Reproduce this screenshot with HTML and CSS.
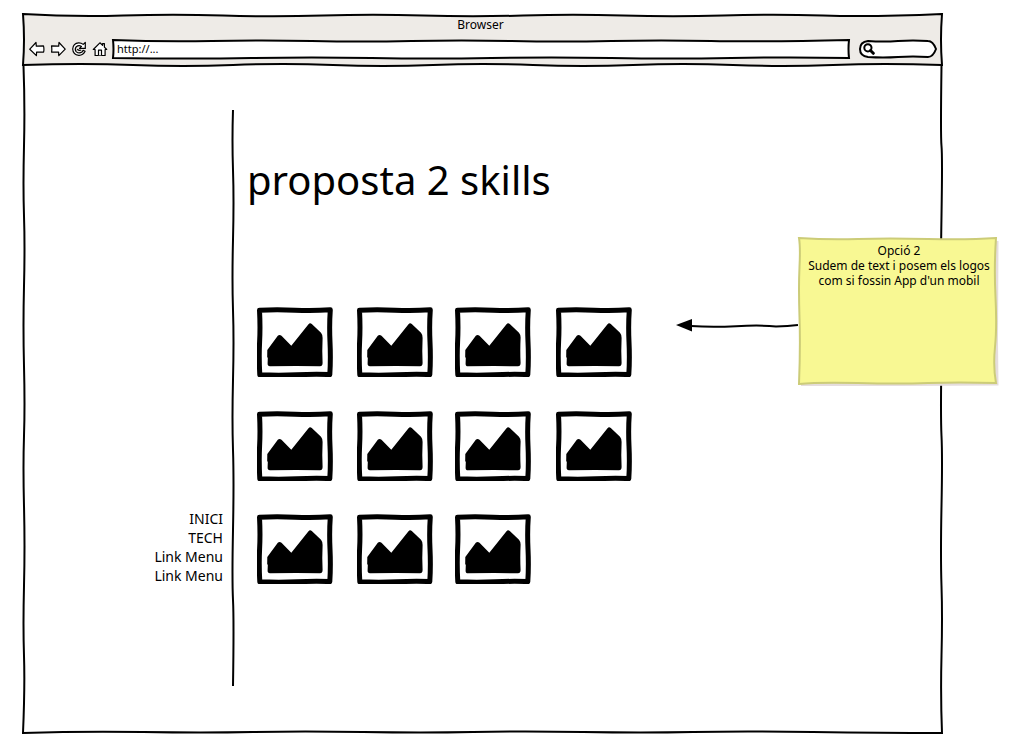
FILE: index.html
```html
<!DOCTYPE html>
<html lang="ca">
<head>
<meta charset="utf-8">
<meta name="viewport" content="width=device-width, initial-scale=1">
<title>proposta 2 skills</title>
<link rel="stylesheet" href="styles.css">
</head>
<body>
<svg class="defs" aria-hidden="true">
  <symbol id="picture" viewBox="0 0 76 70">
    <path d="M2.5 3.2 Q20 2.4 38 3.2 T73.3 2.8 Q72.2 18 73 35 T72.8 67.600 Q58 67 40 67.800 T2.8 67.800 Q1.8 50 2.6 35 T2.5 3.2Z" fill="#fff" stroke="#000" stroke-width="5" stroke-linejoin="round"/>
    <path d="M10.300 43 L20.800 28.800 Q22.500 27 24.500 28.800 L34.3 38.800 L51.500 17.2 Q53 15.6 54.8 17 L64 25.8 Q65.800 28 65.600 31 Q65 44 65.600 56 Q65.5 59.300 63 59.300 Q40 58.800 13 59.300 Q10.5 59.300 10.6 56.5 L10.8 51 L10.2 50Z"/>
  </symbol>
</svg>
<div class="browser">
  <header class="chrome">
    <svg class="sketch" viewBox="0 0 919 52" preserveAspectRatio="none" aria-hidden="true">
      <path class="chrome-fill" d="M0 0 Q50 3 100 1.500 T200 1.500 T300 1.500 T400 1.500 T500 1.500 T600 1.500 T700 1.500 T800 1.500 T919 0 Q917 26 919 51 Q860 49 810 51 T710 51 T610 51 T510 51 T410 51 T310 51 T210 51 T110 51 T0 51 Q2 26 0 0Z"/>
    </svg>
    <div class="title">Browser</div>
    <div class="toolbar">
      <button class="tool" type="button" aria-label="Enrere"><svg viewBox="0 0 16 16"><path d="M.8 8.2 7 1.500l.3 3.6 7.2-.2q.8 3 .1 6.200l-7-.1-.2 3.600Z"/></svg></button>
      <button class="tool" type="button" aria-label="Endavant"><svg viewBox="0 0 16 16"><path d="M15.2 8.2 9 1.500l-.3 3.6-7.2-.2q.6 3 .1 6.200l7-.1.2 3.600Z"/></svg></button>
      <button class="tool" type="button" aria-label="Recarrega"><svg viewBox="0 0 16 16"><path d="M14.3 1.5v5.9H8.5l2-2Q7.7 3.6 5.3 5.7 3.3 8.2 5.1 10.6q2.800 2.500 5.900.5l1.100-1.700 2 .9Q12 14.500 7.800 14.300 2 13.700 1.700 8 2.200 2.300 7.600 1.900q2.700-.1 4.600 1.500Z"/><path d="M6.200 8.200q2 1.800 4 .8"/></svg></button>
      <button class="tool" type="button" aria-label="Inici"><svg viewBox="0 0 16 16"><path d="M1.300 8.500 7.900 1.800l2.700 2.500V2.600h1.800v3.600l2.300 2.300h-1.600v6H3.100v-6Z"/><path d="M6.500 14.300V9.200h3v5.100"/></svg></button>
      <div class="address">
        <svg class="sketch" viewBox="0 0 739 20" preserveAspectRatio="none" aria-hidden="true">
          <path class="box" d="M1 1 Q50 3 100 2 T200 2 T300 2 T400 2 T500 2 T600 2 T738 1 Q737 10 738 19 Q680 18 620 19 T500 19 T380 19 T260 19 T140 19 T1 19 Q2 10 1 1Z"/>
        </svg>
        <input type="text" value="http://..." aria-label="Adreça">
      </div>
      <div class="search">
        <svg class="sketch" viewBox="0 0 78 18" preserveAspectRatio="none" aria-hidden="true">
          <path class="box" d="M9 1 Q24 2 39 1 T69 1 Q74 1 77 9 Q74 17 69 17 Q54 16 39 17 T9 17 Q1 16 1 9 Q1 2 9 1Z"/>
        </svg>
        <svg class="lens" viewBox="0 0 12 12" aria-hidden="true"><circle cx="4.900" cy="4.800" r="3.600"/><path d="M7.500 7.500 10.300 10.300"/></svg>
        <input type="text" aria-label="Cerca">
      </div>
    </div>
  </header>
  <div class="page">
    <svg class="sketch" viewBox="0 0 919 668" preserveAspectRatio="none" aria-hidden="true">
      <path class="line" d="M.5 0 Q2 40 1 80 T1 150 T1 220 T1 300 T1 370 T1 440 T1 520 T1 590 T0 667 Q60 665 120 666 T230 666 T340 666 T450 666 T560 666 T670 666 T790 666 T919 667 Q917.500 630 918.500 590 T918.500 520 T918.500 440 T918.500 370 T918.500 290 T918.500 220 T918.500 150 T918.500 80 T918.500 0"/>
    </svg>
    <nav class="menu">
      <svg class="divider" viewBox="0 0 4 576" preserveAspectRatio="none" aria-hidden="true">
        <path class="line" d="M2 0 Q1 30 2 60 T2 130 T2 200 T2 270 T2 340 T2 420 T2 490 T2 576"/>
      </svg>
      <a href="#inici">INICI</a>
      <a href="#tech">TECH</a>
      <a href="#menu3">Link Menu</a>
      <a href="#menu4">Link Menu</a>
    </nav>
    <main class="content">
      <h1>proposta 2 skills</h1>
      <div class="gallery">
        <svg><use href="#picture"/></svg>
        <svg><use href="#picture"/></svg>
        <svg><use href="#picture"/></svg>
        <svg><use href="#picture"/></svg>
        <svg><use href="#picture"/></svg>
        <svg><use href="#picture"/></svg>
        <svg><use href="#picture"/></svg>
        <svg><use href="#picture"/></svg>
        <svg><use href="#picture"/></svg>
        <svg><use href="#picture"/></svg>
        <svg><use href="#picture"/></svg>
      </div>
    </main>
  </div>
  <aside class="annotation">
    <svg class="arrow" viewBox="0 0 122 14" aria-hidden="true">
      <path d="M0 7 16 1V13.500Z"/>
      <path class="line" d="M15 8 Q35 9.500 60 8.200 T100 8.500 Q112 8.500 122 7"/>
    </svg>
    <div class="note">
      <svg class="sketch" viewBox="0 0 200 149" preserveAspectRatio="none" aria-hidden="true">
        <path class="shadow" d="M3 4 L200.500 4 200 104 200.500 148.500 100 149 3 149Z"/>
        <path class="paper" d="M1 1 Q30 3 60 2 T130 2 T198 1 Q196 30 197.500 60 T197 110 T198 146 Q160 145 130 146 T60 146 T1 147 Q2.500 110 1.500 80 T1.500 30 T1 1Z"/>
      </svg>
      <p>Opció 2<br>Sudem de text i posem els logos<br>com si fossin App d'un mobil</p>
    </div>
  </aside>
</div>
</body>
</html>
```
FILE: styles.css
```css
* { box-sizing: border-box; }

body {
  margin: 0;
  padding: 14px 74px 7px 23px;
  background: #fff;
  color: #000;
  font-family: "Noto Sans", sans-serif;
  font-size: 12px;
}

.defs { position: absolute; width: 0; height: 0; }

.browser {
  position: relative;
  display: flex;
  flex-direction: column;
  min-height: calc(100vh - 21px);
}

/* Hand-drawn outlines stretch with the box they surround */
.sketch {
  position: absolute;
  inset: 0;
  width: 100%;
  height: 100%;
  overflow: visible;
  pointer-events: none;
}

.sketch path, .line { vector-effect: non-scaling-stroke; }
.line { fill: none; stroke: #000; stroke-width: 2; }
.box { fill: #fff; stroke: #000; stroke-width: 2; }
.chrome-fill { fill: #eeebe7; stroke: #000; stroke-width: 2; }

.chrome { position: relative; height: 52px; }

.title {
  position: relative;
  padding: 2px 4px 0 0;
  line-height: 18px;
  text-align: center;
}

.toolbar {
  position: relative;
  display: flex;
  align-items: center;
  gap: 3px;
  height: 29px;
  padding: 0 5px;
}

.tool {
  width: 18px;
  height: 16px;
  padding: 0 1px;
  border: 0;
  background: none;
}

.tool svg {
  display: block;
  width: 16px;
  height: 16px;
  fill: #fff;
  stroke: #000;
  stroke-width: 1.2;
  stroke-linejoin: round;
}

.address {
  position: relative;
  flex: 1;
  height: 20px;
}

.search {
  position: relative;
  display: flex;
  align-items: center;
  width: 78px;
  height: 18px;
  margin-left: 6px;
  padding: 0 10px 0 4px;
}

.lens {
  position: relative;
  flex: none;
  width: 12px;
  height: 12px;
  fill: none;
  stroke: #000;
  stroke-width: 2;
}

.lens path { stroke-width: 3; stroke-linecap: round; }

input {
  position: relative;
  display: block;
  width: 100%;
  height: 100%;
  padding: 0 5px;
  border: 0;
  outline: 0;
  background: none;
  color: inherit;
  font: inherit;
}

.address input { font-size: 11px; }
.search input { min-width: 0; padding: 0; }

.page {
  position: relative;
  flex: 1;
  display: grid;
  grid-template-columns: 212px 1fr;
  padding-top: 44px;
  padding-bottom: 48px;
}

.menu {
  position: relative;
  display: flex;
  flex-direction: column;
  justify-content: flex-end;
  padding: 0 12px 101px 0;
  text-align: right;
}

.menu a {
  color: #000;
  font-size: 14px;
  line-height: 19px;
  text-decoration: none;
}

.divider {
  position: absolute;
  top: 0;
  right: 0;
  width: 4px;
  height: 100%;
}

.content { padding: 42px 12px 0; }

h1 {
  margin: 0;
  font-size: 40px;
  font-weight: 400;
  line-height: 56px;
}

.gallery {
  display: grid;
  grid-template-columns: 100px 98px 101px 76px;
  grid-template-rows: 104px 103px 70px;
  margin: 99px 0 0 10px;
}

.gallery svg { width: 76px; height: 70px; }

/* Sticky note pinned over the window edge */
.annotation {
  position: absolute;
  top: 223px;
  right: -56px;
  display: flex;
}

.arrow { width: 122px; height: 14px; margin-top: 81px; }

.note {
  position: relative;
  width: 200px;
  height: 149px;
  padding: 6px 2px 6px 4px;
}

.shadow { fill: #e5dddd; }
.paper { fill: #f8f893; stroke: #cccc78; stroke-width: 2; }

.note p {
  position: relative;
  margin: 0;
  line-height: 15px;
  text-align: center;
}
```
